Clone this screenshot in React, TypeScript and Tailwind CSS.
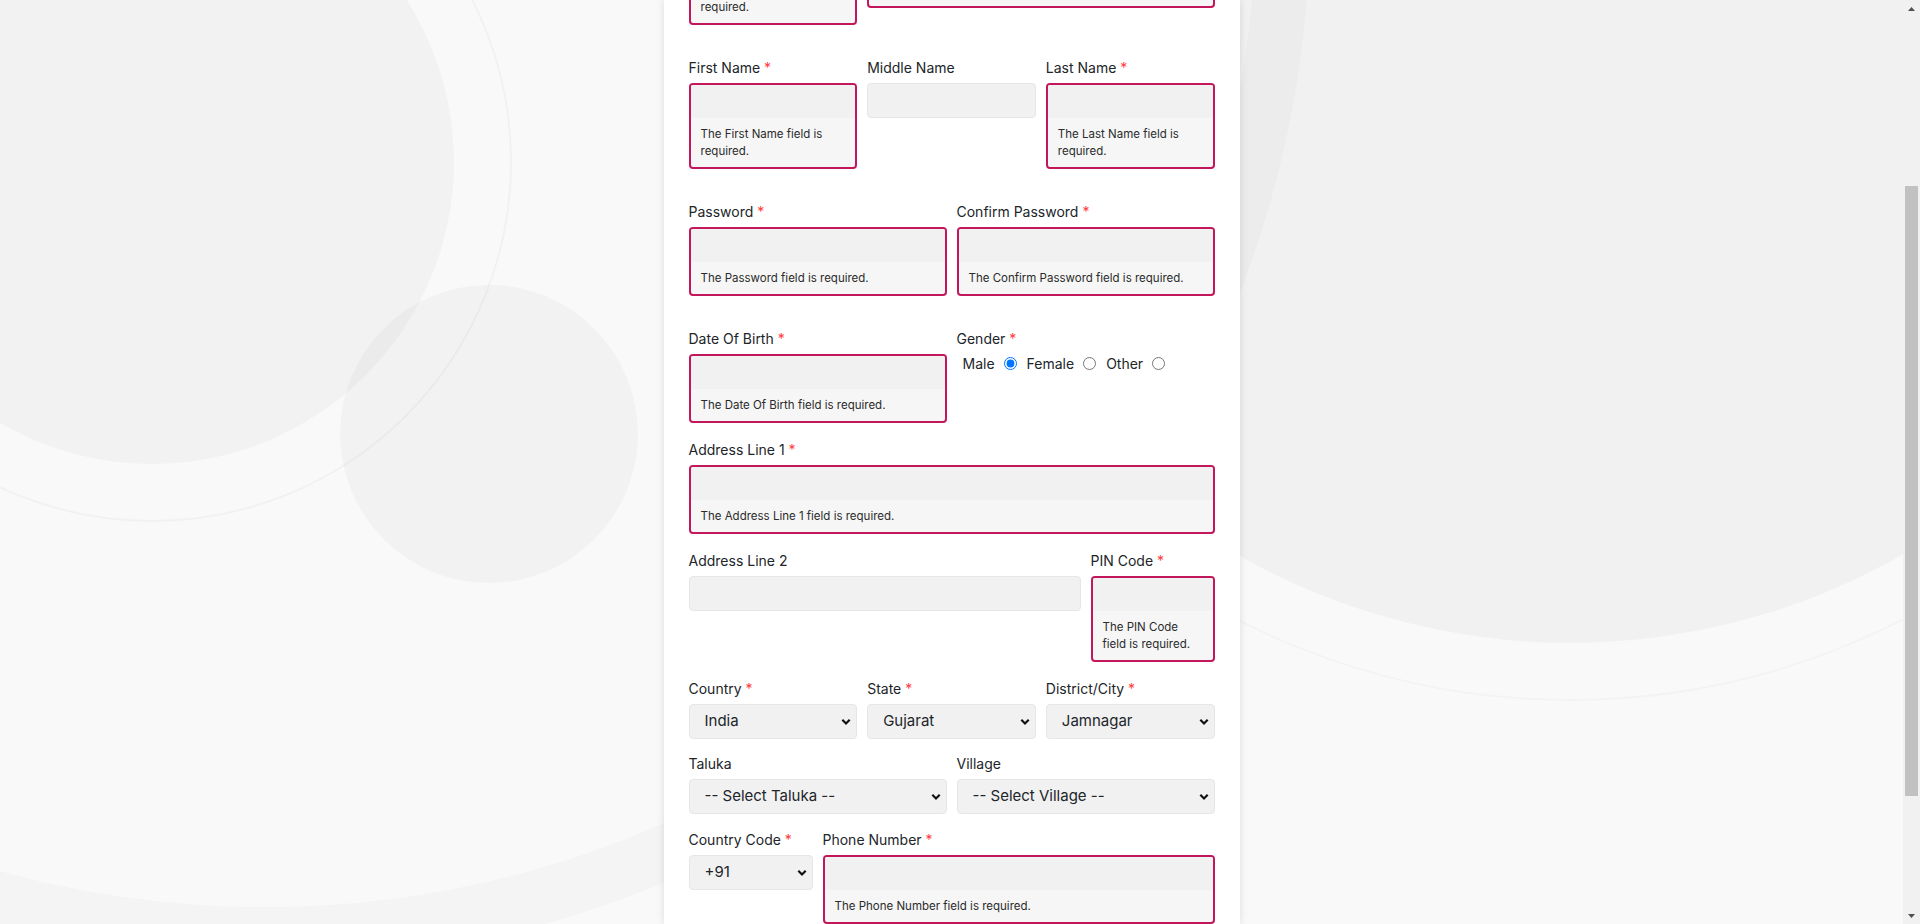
import { ReactNode } from 'react';

const Label = ({ text, required }: { text: string; required?: boolean }) => (
  <label className="mb-[5px] block text-[14px] leading-[21px] text-[#212529] whitespace-nowrap">
    {text}
    {required && <span className="text-[#ff3b3b]"> *</span>}
  </label>
);

const ErrorInput = ({ msg, type = 'text' }: { msg: string; type?: string }) => (
  <div className="overflow-hidden rounded-[4px] border-2 border-[#c2185b] bg-[#f6f6f6]">
    <input type={type} className="block h-[33px] w-full bg-[#f1f1f1] px-3 text-[14px] outline-none" />
    <div className="pb-[7px] pl-[10px] pr-[14px] pt-2 text-[11.5px] leading-[17px] text-[#2b2b2b]">{msg}</div>
  </div>
);

const PlainInput = () => (
  <input className="block h-[35px] w-full rounded-[4px] border border-[#e6e6e6] bg-[#f1f1f1] px-3 text-[14px] outline-none" />
);

const Select = ({ value, options }: { value: string; options: string[] }) => (
  <div className="relative">
    <select
      defaultValue={value}
      className="block h-[35px] w-full appearance-none rounded-[4px] border border-[#e6e6e6] bg-[#f1f1f1] pl-[15px] pr-8 text-[15px] text-[#212529] outline-none"
    >
      {options.map((o) => (
        <option key={o}>{o}</option>
      ))}
    </select>
    <svg
      className="pointer-events-none absolute right-[6px] top-1/2 -translate-y-1/2"
      width="10"
      height="7"
      viewBox="0 0 10 7"
    >
      <path d="M1.3 1.3 5 5 8.7 1.3" fill="none" stroke="#111" strokeWidth="2.2" />
    </svg>
  </div>
);

const Field = ({ className, children }: { className: string; children: ReactNode }) => (
  <div className={className}>{children}</div>
);

const Radio = ({ text, checked }: { text: string; checked?: boolean }) => (
  <label className="mr-[10px] flex items-center">
    <span>{text}</span>
    <input type="radio" name="gender" defaultChecked={checked} className="m-0 ml-[9px] h-[13px] w-[13px]" />
  </label>
);

export default function App() {
  return (
    <div className="relative flex h-[924px] w-full overflow-hidden bg-[#f9f9f9] font-['Inter',sans-serif]">
      {/* background shapes */}
      <div className="pointer-events-none absolute left-[-780px] top-[-1128px] h-[2090px] w-[2090px] rounded-full border-[55px] border-black/[0.02]" />
      <div className="pointer-events-none absolute left-[899px] top-[-699px] h-[1342px] w-[1342px] rounded-full bg-black/[0.03]" />
      <div className="pointer-events-none absolute left-[841px] top-[-757px] h-[1458px] w-[1458px] rounded-full border-2 border-black/[0.025]" />
      <div className="pointer-events-none absolute left-[-150px] top-[-140px] h-[604px] w-[604px] rounded-full bg-black/[0.028]" />
      <div className="pointer-events-none absolute left-[-208px] top-[-198px] h-[720px] w-[720px] rounded-full border-2 border-black/[0.03]" />
      <div className="pointer-events-none absolute left-[340px] top-[285px] h-[298px] w-[298px] rounded-full bg-black/[0.028]" />

      <main className="relative flex flex-1 justify-center">
        <div className="h-full w-[576px] overflow-hidden bg-white px-[25px] shadow-[0_0_8px_rgba(0,0,0,0.12)]">
          {/* row cut off by scroll */}
          <div className="-mt-[87px] mb-8 grid grid-cols-12 items-start gap-x-[10px]">
            <Field className="col-span-4">
              <Label text="User Name" required />
              <ErrorInput msg="The User Name field is required." />
            </Field>
            <Field className="col-span-8">
              <Label text="Email" required />
              <ErrorInput msg="The Email field is required." />
            </Field>
          </div>

          <div className="mb-8 grid grid-cols-12 items-start gap-x-[10px]">
            <Field className="col-span-4">
              <Label text="First Name" required />
              <ErrorInput msg="The First Name field is required." />
            </Field>
            <Field className="col-span-4">
              <Label text="Middle Name" />
              <PlainInput />
            </Field>
            <Field className="col-span-4">
              <Label text="Last Name" required />
              <ErrorInput msg="The Last Name field is required." />
            </Field>
          </div>

          <div className="mb-8 grid grid-cols-12 items-start gap-x-[10px]">
            <Field className="col-span-6">
              <Label text="Password" required />
              <ErrorInput type="password" msg="The Password field is required." />
            </Field>
            <Field className="col-span-6">
              <Label text="Confirm Password" required />
              <ErrorInput type="password" msg="The Confirm Password field is required." />
            </Field>
          </div>

          <div className="mb-4 grid grid-cols-12 items-start gap-x-[10px]">
            <Field className="col-span-6">
              <Label text="Date Of Birth" required />
              <ErrorInput msg="The Date Of Birth field is required." />
            </Field>
            <Field className="col-span-6">
              <Label text="Gender" required />
              <div className="flex h-[18px] items-center pl-[6px] text-[14px] text-[#212529]">
                <Radio text="Male" checked />
                <Radio text="Female" />
                <Radio text="Other" />
              </div>
            </Field>
          </div>

          <div className="mb-4 grid grid-cols-12 items-start gap-x-[10px]">
            <Field className="col-span-12">
              <Label text="Address Line 1" required />
              <ErrorInput msg="The Address Line 1 field is required." />
            </Field>
          </div>

          <div className="mb-4 grid grid-cols-12 items-start gap-x-[10px]">
            <Field className="col-span-9">
              <Label text="Address Line 2" />
              <PlainInput />
            </Field>
            <Field className="col-span-3">
              <Label text="PIN Code" required />
              <ErrorInput msg="The PIN Code field is required." />
            </Field>
          </div>

          <div className="mb-[14px] grid grid-cols-12 items-start gap-x-[10px]">
            <Field className="col-span-4">
              <Label text="Country" required />
              <Select value="India" options={['India']} />
            </Field>
            <Field className="col-span-4">
              <Label text="State" required />
              <Select value="Gujarat" options={['Gujarat']} />
            </Field>
            <Field className="col-span-4">
              <Label text="District/City" required />
              <Select value="Jamnagar" options={['Jamnagar']} />
            </Field>
          </div>

          <div className="mb-[15px] grid grid-cols-12 items-start gap-x-[10px]">
            <Field className="col-span-6">
              <Label text="Taluka" />
              <Select value="-- Select Taluka --" options={['-- Select Taluka --']} />
            </Field>
            <Field className="col-span-6">
              <Label text="Village" />
              <Select value="-- Select Village --" options={['-- Select Village --']} />
            </Field>
          </div>

          <div className="mb-4 grid grid-cols-12 items-start gap-x-[10px]">
            <Field className="col-span-3">
              <Label text="Country Code" required />
              <Select value="+91" options={['+91']} />
            </Field>
            <Field className="col-span-9">
              <Label text="Phone Number" required />
              <ErrorInput msg="The Phone Number field is required." />
            </Field>
          </div>
        </div>
      </main>

      {/* scrollbar */}
      <div className="relative flex w-[17px] shrink-0 flex-col bg-[#f1f1f1]">
        <div className="flex h-[17px] items-center justify-center">
          <svg width="7" height="4" viewBox="0 0 7 4">
            <path d="M0 4 3.5 0 7 4z" fill="#505050" />
          </svg>
        </div>
        <div className="ml-[2px] mt-[169px] h-[610px] w-[13px] bg-[#c1c1c1]" />
        <div className="mt-auto flex h-[17px] items-center justify-center">
          <svg width="7" height="4" viewBox="0 0 7 4">
            <path d="M0 0 3.5 4 7 0z" fill="#505050" />
          </svg>
        </div>
      </div>
    </div>
  );
}
